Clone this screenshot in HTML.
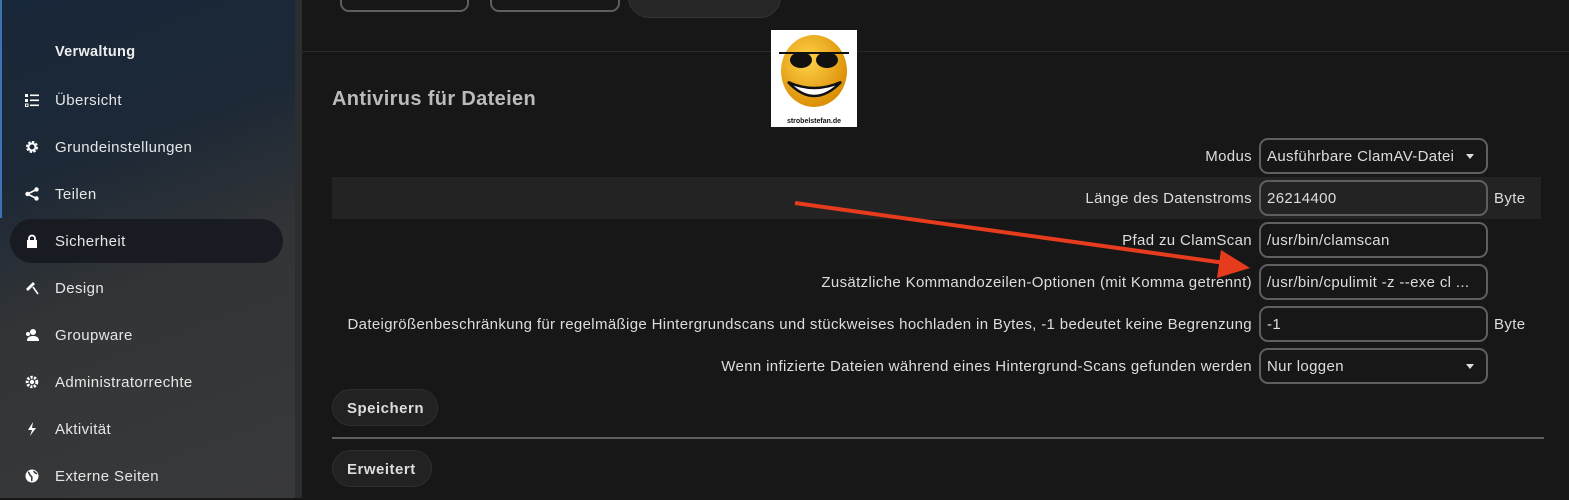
<!DOCTYPE html><html><head><meta charset="utf-8"><style>
*{box-sizing:border-box;margin:0;padding:0}
body{width:1569px;height:498px;overflow:hidden;background:#171717;font-family:"Liberation Sans",sans-serif;position:relative;color:#ddd}
#sb{position:absolute;left:0;top:0;width:295px;height:498px;background:linear-gradient(160deg,#19273a 0%,#1c2836 30%,#323436 55%,#38393b 100%)}
#sb:before{content:"";position:absolute;left:0;top:0;width:2px;height:218px;background:#3b73b5}
#strip{position:absolute;left:295px;top:0;width:7px;height:498px;background:#2c2d2f}
.h{position:absolute;left:55px;top:44px;font-size:14.5px;font-weight:bold;color:#eee;letter-spacing:.3px}
.it{position:absolute;left:10px;width:273px;height:44px;border-radius:22px;font-size:15px;letter-spacing:.4px;color:#e6e6e6;padding-left:45px;line-height:46px}
.it.a{background:#181c22}
.ic{position:absolute;left:15px;top:15px;width:14px;height:14px}
.in{position:absolute;border:2px solid #5f5f5f;border-radius:9px;height:36px;font-size:15px;letter-spacing:.35px;line-height:34px;padding-left:6px;color:#ddd}
.lab{position:absolute;right:317px;font-size:15px;letter-spacing:.35px;color:#ddd;text-align:right;white-space:nowrap}
.car{position:absolute;right:12px;top:14px;border:4px solid transparent;border-top:5px solid #ddd}
.btn{position:absolute;left:332px;height:37px;border-radius:19px;background:#222;border:1px solid #2e2e2e;font-weight:bold;font-size:15px;letter-spacing:.5px;color:#ddd;line-height:38px;padding:0 14px}
.byte{position:absolute;left:1494px;font-size:15px;letter-spacing:.35px}
</style></head><body>
<div id="sb">
<div class="h">Verwaltung</div>
<div class="it" style="top:78px"><svg class="ic" viewBox="0 0 14 14" fill="#fff"><rect x="0" y="1" width="3" height="3"/><rect x="0" y="6" width="3" height="3"/><rect x="0.5" y="11" width="2.5" height="2.5" fill="none" stroke="#fff" stroke-width="1"/><rect x="5" y="1.5" width="9" height="1.6"/><rect x="5" y="6.5" width="9" height="1.6"/><rect x="5" y="11.5" width="9" height="1.6"/></svg>Übersicht</div>
<div class="it" style="top:125px"><svg class="ic" viewBox="0 0 14 14"><circle cx="7" cy="7" r="4.5" fill="none" stroke="#fff" stroke-width="3" stroke-dasharray="2.2 1.3"/><circle cx="7" cy="7" r="3.5" fill="none" stroke="#fff" stroke-width="2"/></svg>Grundeinstellungen</div>
<div class="it" style="top:172px"><svg class="ic" viewBox="0 0 14 14" fill="#fff"><circle cx="11.5" cy="2.5" r="2.2"/><circle cx="2.5" cy="7" r="2.2"/><circle cx="11.5" cy="11.5" r="2.2"/><path d="M11.5 2.5L2.5 7L11.5 11.5" stroke="#fff" stroke-width="1.6" fill="none"/></svg>Teilen</div>
<div class="it a" style="top:219px"><svg class="ic" viewBox="0 0 14 14"><path d="M4 6V4.5a3 3 0 016 0V6" stroke="#fff" stroke-width="1.8" fill="none"/><rect x="2" y="6" width="10" height="8" fill="#fff"/></svg>Sicherheit</div>
<div class="it" style="top:266px"><svg class="ic" viewBox="0 0 14 14"><path d="M1 8L8 1L10 3L3 10Z" fill="#fff"/><path d="M8 6L13 13" stroke="#fff" stroke-width="1.6"/></svg>Design</div>
<div class="it" style="top:313px"><svg class="ic" viewBox="0 0 14 14" fill="#fff"><circle cx="8" cy="4" r="3"/><path d="M2 13c0-4 3-5 6-5s6 1 6 5z"/><circle cx="3" cy="6" r="2"/></svg>Groupware</div>
<div class="it" style="top:360px"><svg class="ic" viewBox="0 0 14 14"><circle cx="7" cy="7" r="4.8" fill="none" stroke="#fff" stroke-width="3" stroke-dasharray="2.2 1.3"/><circle cx="7" cy="7" r="2.2" fill="#fff"/></svg>Administratorrechte</div>
<div class="it" style="top:407px"><svg class="ic" viewBox="0 0 14 14"><path d="M8 0L3 8H7L5 14L11 6H7Z" fill="#fff"/></svg>Aktivität</div>
<div class="it" style="top:454px"><svg class="ic" viewBox="0 0 14 14"><circle cx="7" cy="7" r="6.5" fill="#fff"/><path d="M3 3c2 1 1 3 3 4s0 3 1 5M9 2c0 2 2 2 3 3" stroke="#333" stroke-width="1.5" fill="none"/></svg>Externe Seiten</div>
</div>
<div id="strip"></div>
<div class="in" style="left:340px;top:-24px;width:129px"></div>
<div class="in" style="left:490px;top:-24px;width:130px"></div>
<div style="position:absolute;left:628px;top:-24px;width:153px;height:42px;border-radius:21px;background:#262626;border:1px solid #333"></div>
<div style="position:absolute;left:302px;top:51px;width:1267px;height:1px;background:#2a2a2a"></div>
<div style="position:absolute;left:771px;top:30px;width:86px;height:97px;background:#fff">
<svg width="86" height="80" viewBox="0 0 86 80"><defs><radialGradient id="g" cx=".4" cy=".35" r=".7"><stop offset="0" stop-color="#ffd24a"/><stop offset="1" stop-color="#d98a00"/></radialGradient></defs><ellipse cx="43" cy="41" rx="33" ry="36" fill="url(#g)"/><path d="M8 23H78" stroke="#111" stroke-width="2"/><ellipse cx="30" cy="30" rx="11" ry="8" fill="#111"/><ellipse cx="56" cy="30" rx="11" ry="8" fill="#111"/><path d="M17 52Q43 80 70 52Q43 64 17 52Z" fill="#fff" stroke="#111" stroke-width="2.5"/></svg>
<div style="font-size:7px;color:#111;text-align:center;font-weight:bold;margin-top:3px">strobelstefan.de</div></div>
<div style="position:absolute;left:332px;top:88px;font-size:20px;letter-spacing:.35px;font-weight:bold;color:#bbb">Antivirus für Dateien</div>
<div style="position:absolute;left:332px;top:177px;width:1209px;height:42px;background:#232323"></div>
<div class="lab" style="top:148px">Modus</div>
<div class="in" style="left:1259px;top:138px;width:229px">Ausführbare ClamAV-Datei<span class="car"></span></div>
<div class="lab" style="top:190px">Länge des Datenstroms</div>
<div class="in" style="left:1259px;top:180px;width:229px">26214400</div><div class="byte" style="top:190px">Byte</div>
<div class="lab" style="top:232px">Pfad zu ClamScan</div>
<div class="in" style="left:1259px;top:222px;width:229px">/usr/bin/clamscan</div>
<div class="lab" style="top:274px">Zusätzliche Kommandozeilen-Optionen (mit Komma getrennt)</div>
<div class="in" style="left:1259px;top:264px;width:229px">/usr/bin/cpulimit -z --exe cl ...</div>
<div class="lab" style="top:316px">Dateigrößenbeschränkung für regelmäßige Hintergrundscans und stückweises hochladen in Bytes, -1 bedeutet keine Begrenzung</div>
<div class="in" style="left:1259px;top:306px;width:229px">-1</div><div class="byte" style="top:316px">Byte</div>
<div class="lab" style="top:358px">Wenn infizierte Dateien während eines Hintergrund-Scans gefunden werden</div>
<div class="in" style="left:1259px;top:348px;width:229px">Nur loggen<span class="car"></span></div>
<svg style="position:absolute;left:0;top:0" width="1569" height="498"><line x1="795" y1="203" x2="1225" y2="263" stroke="#e63b1c" stroke-width="4"/><path d="M1250 268L1221 250L1217 278Z" fill="#e63b1c"/></svg>
<div class="btn" style="top:389px;width:106px">Speichern</div>
<div style="position:absolute;left:332px;top:437px;width:1212px;height:2px;background:#5e5e5e"></div>
<div class="btn" style="top:450px;width:100px">Erweitert</div>
</body></html>
